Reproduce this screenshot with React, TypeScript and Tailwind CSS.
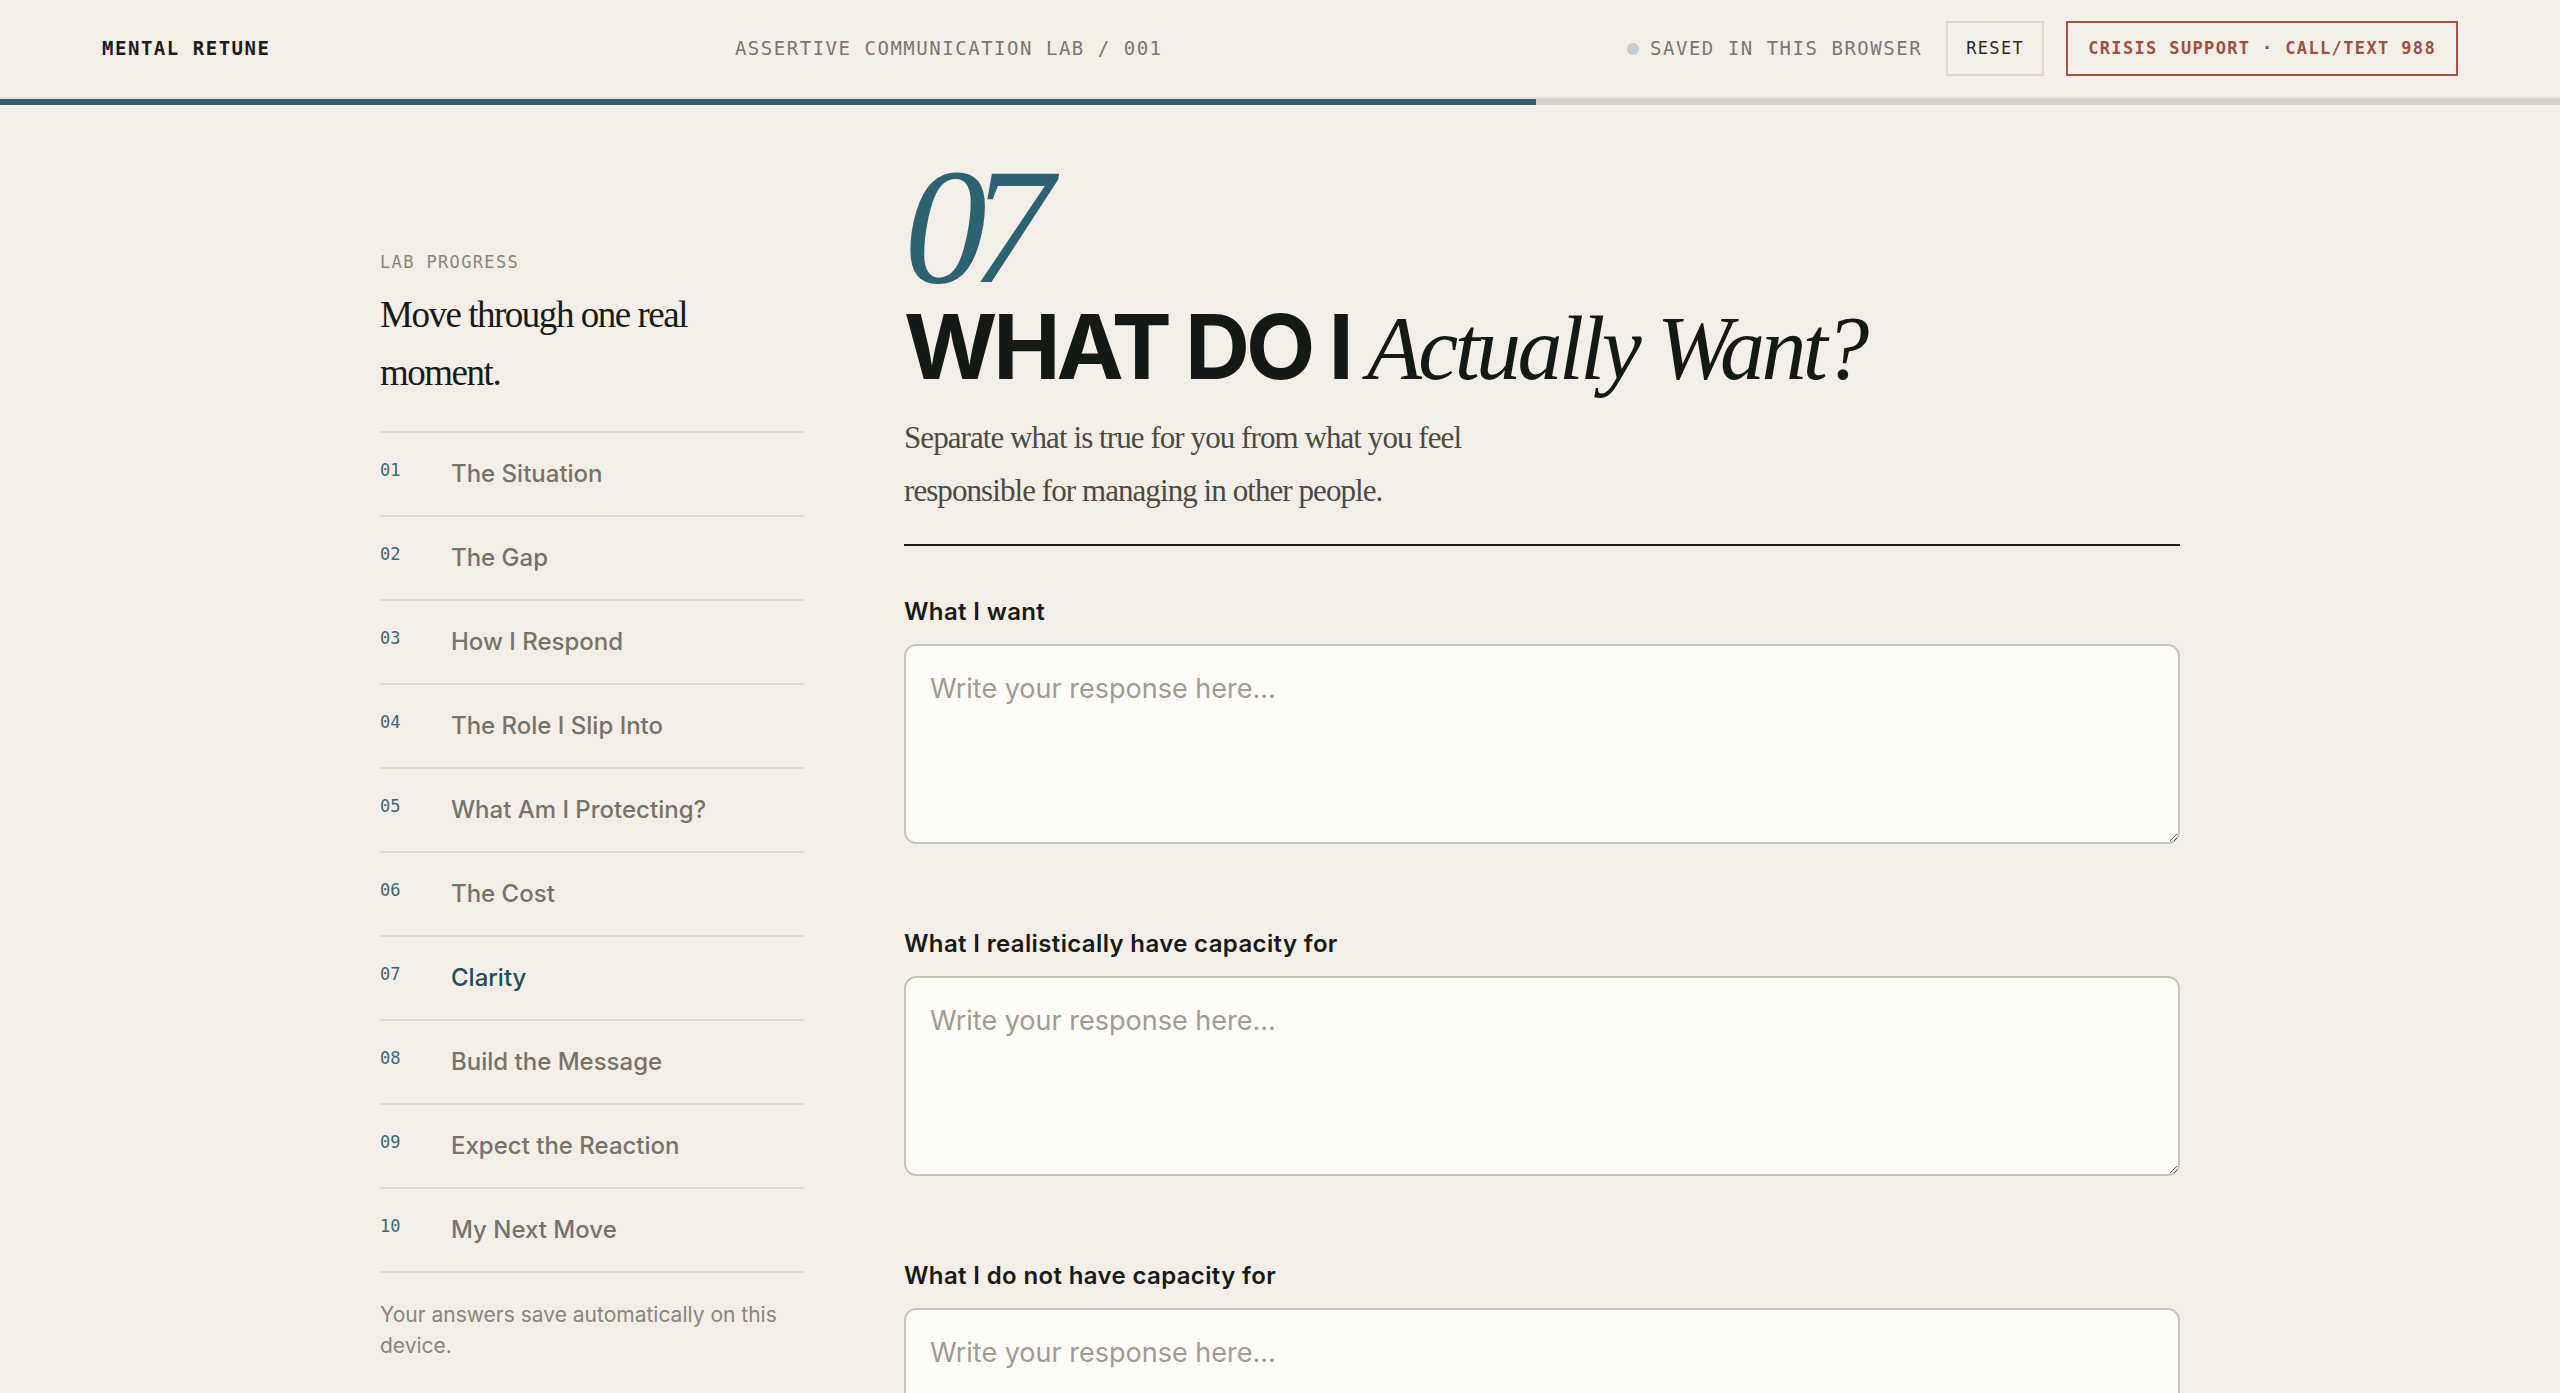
import { useState } from 'react';

const mono = "font-['DejaVu_Sans_Mono',monospace]";
const serif = "font-['Liberation_Serif',serif]";
const sans = "font-['Inter',sans-serif]";

const steps = [
  { n: '01', label: 'The Situation' },
  { n: '02', label: 'The Gap' },
  { n: '03', label: 'How I Respond' },
  { n: '04', label: 'The Role I Slip Into' },
  { n: '05', label: 'What Am I Protecting?' },
  { n: '06', label: 'The Cost' },
  { n: '07', label: 'Clarity' },
  { n: '08', label: 'Build the Message' },
  { n: '09', label: 'Expect the Reaction' },
  { n: '10', label: 'My Next Move' },
];

const fields = [
  { id: 'want', label: 'What I want' },
  { id: 'capacity', label: 'What I realistically have capacity for' },
  { id: 'no-capacity', label: 'What I do not have capacity for' },
];

function Header() {
  return (
    <header className={`${mono} h-[99px] px-[102px] flex items-center justify-between border-b-2 border-[#e2ddd1]`}>
      <div className="text-[19px] font-bold tracking-[0.08em] text-[#1b1d1a]">MENTAL RETUNE</div>
      <div className="text-[19px] tracking-[0.08em] text-[#7b776f]">ASSERTIVE COMMUNICATION LAB / 001</div>
      <div className="flex items-center">
        <span className="w-3 h-3 rounded-full bg-[#c5cecc]" />
        <span className="ml-[11px] text-[19px] tracking-[0.08em] text-[#7b776f]">SAVED IN THIS BROWSER</span>
        <button className="ml-6 h-[55px] px-[18px] border-2 border-[#dcd7ca] text-[17px] tracking-[0.08em] text-[#2a2b28]">
          RESET
        </button>
        <button className="ml-[22px] h-[55px] px-5 border-2 border-[#a8523f] text-[17px] font-bold tracking-[0.08em] text-[#a24f3d]">
          CRISIS SUPPORT · CALL/TEXT 988
        </button>
      </div>
    </header>
  );
}

function Sidebar() {
  return (
    <aside className="pt-[100px]">
      <div className={`${mono} text-[17px] leading-6 tracking-[0.08em] text-[#8a857c]`}>LAB PROGRESS</div>
      <h2 className={`${serif} mt-3 max-w-[340px] text-[37px] leading-[58px] tracking-[-0.04em] text-[#181b18]`}>
        Move through one real moment.
      </h2>
      <ol className="mt-[29px] border-t-2 border-[#dcd7ca]">
        {steps.map((s) => {
          const active = s.n === '07';
          return (
            <li key={s.n} className="flex items-start py-[25px] border-b-2 border-[#dcd7ca]">
              <span className={`${mono} w-[71px] shrink-0 text-[17px] leading-6 text-[#3a6877]`}>{s.n}</span>
              <span
                className={`${sans} text-[24px] leading-8 font-medium ${active ? 'text-[#1f4f5d]' : 'text-[#77736b]'}`}
              >
                {s.label}
              </span>
            </li>
          );
        })}
      </ol>
      <p className={`${sans} mt-[26px] text-[21px] leading-[31px] text-[#8a857d]`}>
        Your answers save automatically on this device.
      </p>
    </aside>
  );
}

function Field({ id, label }: { id: string; label: string }) {
  const [value, setValue] = useState('');
  return (
    <div>
      <label
        htmlFor={id}
        className={`${sans} block text-[24px] leading-[30px] font-semibold tracking-[0.015em] text-[#191b18]`}
      >
        {label}
      </label>
      <textarea
        id={id}
        value={value}
        onChange={(e) => setValue(e.target.value)}
        placeholder="Write your response here..."
        className={`${sans} mt-[17px] block w-full h-[200px] rounded-xl border-2 border-[#cac4b6] bg-[#fdfcf8] px-6 pt-[25px] pb-5 text-[27px] leading-9 text-[#1b1d1a] placeholder:text-[#a19b91] outline-none resize-y`}
      />
    </div>
  );
}

export default function App() {
  return (
    <div className="min-h-screen bg-[#f3efe8]">
      <Header />
      {/* progress: step 7 of 10 */}
      <div className="h-[6px] bg-[#d6d2c4]">
        <div className="h-full w-[60%] bg-[#2e6170]" />
      </div>

      <div className="max-w-[1800px] mx-auto pt-[45px] pb-24 grid grid-cols-[424px_1fr] gap-x-[100px] items-start">
        <Sidebar />

        <main>
          <div className="border-b-2 border-[#1c1f1c] pb-[27px]">
            <div className={`${serif} italic text-[166px] leading-[152px] tracking-[-0.1em] text-[#2d6272]`}>07</div>
            <h1 className={`${sans} text-[90px] leading-none font-bold tracking-[-0.045em] text-[#151916]`}>
              WHAT DO I{' '}
              <span className={`${serif} italic font-normal tracking-[-0.04em]`}>Actually Want?</span>
            </h1>
            <p className={`${serif} mt-[17px] max-w-[600px] text-[31px] leading-[53px] tracking-[-0.03em] text-[#4d4943]`}>
              Separate what is true for you from what you feel responsible for managing in other people.
            </p>
          </div>

          <div className="mt-[51px] flex flex-col gap-[85px]">
            {fields.map((f) => (
              <Field key={f.id} id={f.id} label={f.label} />
            ))}
          </div>
        </main>
      </div>
    </div>
  );
}
